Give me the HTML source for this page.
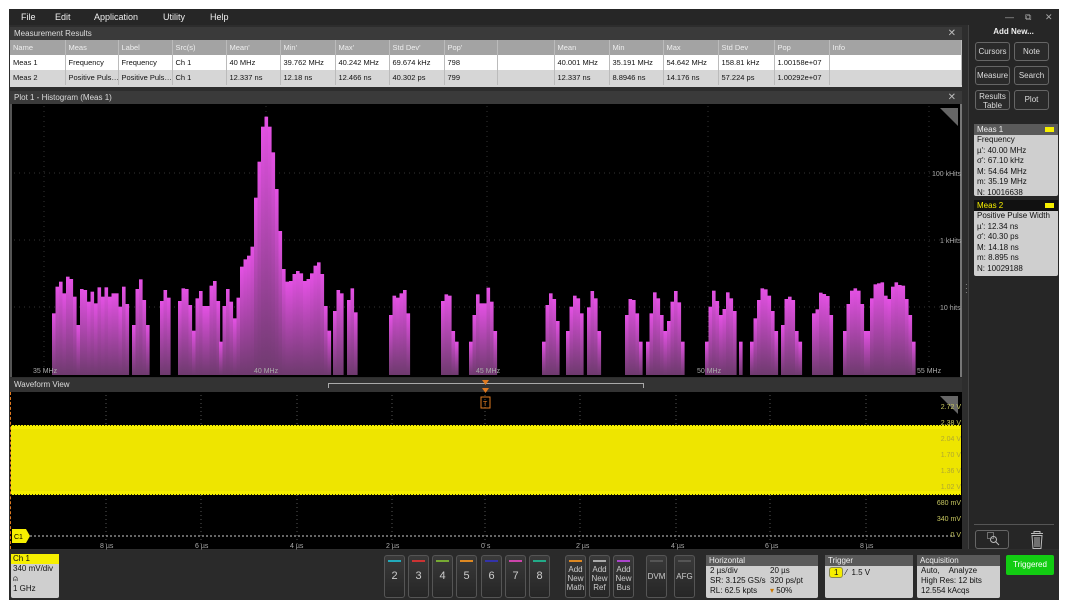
<!DOCTYPE html>
<html><head><meta charset="utf-8"><style>
*{margin:0;padding:0;box-sizing:border-box}
body{width:1069px;height:612px;background:#fff;position:relative;overflow:hidden;font-family:"Liberation Sans",sans-serif;font-size:8px;color:#111}
.a{position:absolute}
.dark{background:#2d2d2d}
.hdr{background:#3a3a3a;color:#ddd;font-size:8px;padding-left:4px;line-height:13px}
.x{position:absolute;right:6px;top:0;color:#bbb;font-size:10px}
table{border-collapse:collapse;font-size:7.5px}
td{height:15px;padding-left:3px;border-right:1px solid #bbb;white-space:nowrap;overflow:hidden}
.th td{background:#a3a3a3;color:#eee;height:15px}
.r1 td{background:#fff}
.r2 td{background:#d6d6d6}
.btn{position:absolute;background:#2a2a2a;border:1px solid #666;border-radius:3px;color:#ddd;font-size:8px;text-align:center}
.cb{position:absolute;top:555px;width:21px;height:43px;background:linear-gradient(#3a3a3a,#262626);border:1px solid #555;border-radius:3px;color:#ccc;text-align:center}
.cb i{display:block;height:2px;margin:4px 3px 0}
.cb span{display:block;font-size:11px;margin-top:8px}
.cb b{display:block;font-weight:normal;font-size:8px;line-height:9px;margin-top:3px}
.box{position:absolute;background:#cfcfcf;border-radius:2px;font-size:8px;line-height:10px;color:#111}
.box .h{background:#5a5a5a;color:#eee;padding-left:3px;line-height:11px}
.mb{position:absolute;left:974px;width:84px;background:#cfcfcf;border-radius:2px;font-size:8px;line-height:10.5px;padding-left:3px}
.yl{position:absolute;right:108px;color:#c8c860;font-size:7px}
.yl.in{color:#b0a830}
.tl{position:absolute;top:543px;color:#aaa;font-size:7px}
</style></head><body>
<div class="a dark" style="left:9px;top:9px;width:1050px;height:591px"></div>
<div class="a" style="left:9px;top:9px;width:1050px;height:16px;background:#262626;color:#eee;font-size:9px;line-height:16px">
<span class="a" style="left:12px">File</span><span class="a" style="left:46px">Edit</span><span class="a" style="left:85px">Application</span><span class="a" style="left:154px">Utility</span><span class="a" style="left:201px">Help</span>
<span class="a" style="left:996px;color:#aaa">—</span><span class="a" style="left:1016px;color:#aaa">⧉</span><span class="a" style="left:1036px;color:#aaa">✕</span>
</div>
<div class="a hdr" style="left:10px;top:27px;width:952px;height:13px">Measurement Results<span class="x">✕</span></div>
<div class="a" style="left:10px;top:40px;width:952px;height:47px;background:#d6d6d6">
<table style="width:952px;table-layout:fixed">
<colgroup><col style="width:55px"><col style="width:53px"><col style="width:54px"><col style="width:54px"><col style="width:54px"><col style="width:55px"><col style="width:54px"><col style="width:55px"><col style="width:53px"><col style="width:57px"><col style="width:55px"><col style="width:54px"><col style="width:55px"><col style="width:56px"><col style="width:55px"><col></colgroup>
<tr class="th"><td>Name</td><td>Meas</td><td>Label</td><td>Src(s)</td><td>Mean'</td><td>Min'</td><td>Max'</td><td>Std Dev'</td><td>Pop'</td><td></td><td>Mean</td><td>Min</td><td>Max</td><td>Std Dev</td><td>Pop</td><td>Info</td></tr>
<tr class="r1"><td>Meas 1</td><td>Frequency</td><td>Frequency</td><td>Ch 1</td><td>40 MHz</td><td>39.762 MHz</td><td>40.242 MHz</td><td>69.674 kHz</td><td>798</td><td></td><td>40.001 MHz</td><td>35.191 MHz</td><td>54.642 MHz</td><td>158.81 kHz</td><td>1.00158e+07</td><td></td></tr>
<tr class="r2"><td>Meas 2</td><td>Positive Puls…</td><td>Positive Puls…</td><td>Ch 1</td><td>12.337 ns</td><td>12.18 ns</td><td>12.466 ns</td><td>40.302 ps</td><td>799</td><td></td><td>12.337 ns</td><td>8.8946 ns</td><td>14.176 ns</td><td>57.224 ps</td><td>1.00292e+07</td><td></td></tr>
</table></div>
<div class="a hdr" style="left:10px;top:91px;width:952px;height:13px">Plot 1 - Histogram (Meas 1)<span class="x">✕</span></div>
<div class="a" style="left:10px;top:104px;width:952px;height:273px;background:#000;border-left:2px solid #555;border-right:2px solid #777"></div>
<svg class="a" style="left:0;top:0" width="1069" height="612" id="hs">
<defs><linearGradient id="g" x1="0" y1="0" x2="0" y2="1"><stop offset="0" stop-color="#e451e4"/><stop offset="1" stop-color="#6e3a6e"/></linearGradient></defs>
<g stroke="#333" stroke-dasharray="1,4">
<line x1="44" y1="106" x2="44" y2="372"/><line x1="266" y1="106" x2="266" y2="372"/><line x1="487" y1="106" x2="487" y2="372"/><line x1="708" y1="106" x2="708" y2="372"/><line x1="929" y1="106" x2="929" y2="372"/>
<line x1="14" y1="173" x2="958" y2="173"/><line x1="14" y1="240" x2="958" y2="240"/><line x1="14" y1="307" x2="958" y2="307"/>
</g>
<g id="bars"></g>
<g fill="#aaa" font-size="7" font-family="Liberation Sans">
<text x="33" y="373">35 MHz</text><text x="254" y="373">40 MHz</text><text x="476" y="373">45 MHz</text><text x="697" y="373">50 MHz</text><text x="917" y="373">55 MHz</text>
<text x="932" y="176">100 kHits</text><text x="940" y="243">1 kHits</text><text x="940" y="310">10 hits</text>
</g>
<polygon points="940,108 958,108 958,126" fill="#666"/>
</svg>
<div class="a hdr" style="left:10px;top:378px;width:952px;height:14px;background:#333">Waveform View</div>
<div class="a" style="left:328px;top:383px;width:316px;height:5px;border:1px solid #aaa;border-bottom:none"></div>
<div class="a" style="left:10px;top:392px;width:952px;height:157px;background:#000;border-left:1px dashed #e07a20"></div>
<svg class="a" style="left:0;top:0" width="1069" height="612">
<g stroke="#555" stroke-dasharray="1,3">
<line x1="106" y1="395" x2="106" y2="545"/><line x1="201" y1="395" x2="201" y2="545"/><line x1="297" y1="395" x2="297" y2="545"/><line x1="392" y1="395" x2="392" y2="545"/><line x1="485" y1="395" x2="485" y2="545"/><line x1="580" y1="395" x2="580" y2="545"/><line x1="676" y1="395" x2="676" y2="545"/><line x1="770" y1="395" x2="770" y2="545"/><line x1="866" y1="395" x2="866" y2="545"/>
</g>
<rect x="11" y="425" width="950" height="70" fill="#f6ef00"/>
<rect x="11" y="429" width="950" height="62" fill="#eee500"/>
<g stroke="#3a3a00" stroke-width="1"><line x1="11" y1="425.5" x2="961" y2="425.5" stroke-dasharray="1,2"/><line x1="11" y1="494.5" x2="961" y2="494.5" stroke-dasharray="1,2"/></g>
<line x1="30" y1="536" x2="955" y2="536" stroke="#ccc" stroke-dasharray="2,2"/>
<path d="M12 529 h14 l4 7 l-4 7 h-14z" fill="#f6ef00"/><text x="14" y="539" font-size="7" fill="#000">C1</text>
<path d="M482 380 h7 l-3.5 5z M482 388 h7 l-3.5 5z" fill="#e07a20"/>
<rect x="481" y="397" width="9" height="11" fill="none" stroke="#e07a20"/><text x="483" y="406" font-size="7" fill="#e07a20">T</text>
<polygon points="940,396 958,396 958,414" fill="#666"/>
</svg>
<div class="yl" style="top:404px">2.72 V</div><div class="yl" style="top:420px">2.38 V</div><div class="yl in" style="top:436px">2.04 V</div><div class="yl in" style="top:452px">1.70 V</div><div class="yl in" style="top:468px">1.36 V</div><div class="yl in" style="top:484px">1.02 V</div><div class="yl" style="top:500px">680 mV</div><div class="yl" style="top:516px">340 mV</div><div class="yl" style="top:532px">0 V</div>
<div class="tl" style="left:100px">8 µs</div><div class="tl" style="left:195px">6 µs</div><div class="tl" style="left:290px">4 µs</div><div class="tl" style="left:386px">2 µs</div><div class="tl" style="left:481px">0 s</div><div class="tl" style="left:576px">2 µs</div><div class="tl" style="left:671px">4 µs</div><div class="tl" style="left:765px">6 µs</div><div class="tl" style="left:860px">8 µs</div>
<div class="a" style="left:968px;top:25px;width:91px;height:524px;background:#262626;border-left:1px solid #444"></div>
<div class="a" style="left:970px;top:27px;width:87px;color:#eee;font-size:8px;font-weight:bold;text-align:center">Add New...</div>
<div class="btn" style="left:975px;top:42px;width:35px;height:19px;line-height:17px">Cursors</div>
<div class="btn" style="left:1014px;top:42px;width:35px;height:19px;line-height:17px">Note</div>
<div class="btn" style="left:975px;top:66px;width:35px;height:19px;line-height:17px">Measure</div>
<div class="btn" style="left:1014px;top:66px;width:35px;height:19px;line-height:17px">Search</div>
<div class="btn" style="left:975px;top:90px;width:35px;height:20px;line-height:9px;padding-top:1px">Results<br>Table</div>
<div class="btn" style="left:1014px;top:90px;width:35px;height:20px;line-height:18px">Plot</div>
<div class="mb" style="top:124px;height:72px;padding:0"><div style="background:#5a5a5a;color:#eee;padding-left:3px;line-height:11px">Meas 1<span style="float:right;margin:3px 4px;width:9px;height:5px;background:#f6ef00"></span></div><div style="padding-left:3px">Frequency<br>µ': 40.00 MHz<br>σ': 67.10 kHz<br>M: 54.64 MHz<br>m: 35.19 MHz<br>N: 10016638</div></div>
<div class="mb" style="top:200px;height:76px;padding:0"><div style="background:#111;color:#f6ef00;padding-left:3px;line-height:11px">Meas 2<span style="float:right;margin:3px 4px;width:9px;height:5px;background:#f6ef00"></span></div><div style="padding-left:3px">Positive Pulse Width<br>µ': 12.34 ns<br>σ': 40.30 ps<br>M: 14.18 ns<br>m: 8.895 ns<br>N: 10029188</div></div>
<div class="a" style="left:974px;top:524px;width:80px;height:1px;background:#555"></div>
<div class="a" style="left:975px;top:530px;width:34px;height:19px;border:1px solid #666;border-radius:3px"></div>
<svg class="a" style="left:970px;top:525px" width="90" height="30">
<g fill="none" stroke="#bbb" stroke-width="1"><rect x="17.5" y="7.5" width="6" height="6" stroke-dasharray="1,1"/><circle cx="23.5" cy="14.5" r="3"/><line x1="25.5" y1="16.5" x2="29" y2="20"/>
<path d="M61 8.5 h12 M64 8.5 v-2 h6 v2 M62 10.5 l1 13 h8 l1 -13z M65 12 v10 M67 12 v10 M69 12 v10"/></g>
</svg>
<div class="a" style="left:965px;top:283px;color:#aaa;font-size:8px;line-height:4px">·<br>·<br>·</div>
<div class="a" style="left:9px;top:550px;width:1050px;height:50px;background:#2a2a2a"></div>
<div class="box" style="left:11px;top:554px;width:48px;height:44px"><div style="background:#f6ef00;line-height:10px;padding-left:2px">Ch 1</div><div style="padding-left:2px;line-height:10px">340 mV/div<br>⍝<br>1 GHz</div></div>
<div class="cb" style="left:384px"><i style="background:#2ab"></i><span>2</span></div>
<div class="cb" style="left:408px"><i style="background:#c33"></i><span>3</span></div>
<div class="cb" style="left:432px"><i style="background:#7a3"></i><span>4</span></div>
<div class="cb" style="left:456px"><i style="background:#d82"></i><span>5</span></div>
<div class="cb" style="left:481px"><i style="background:#33a"></i><span>6</span></div>
<div class="cb" style="left:505px"><i style="background:#c4a"></i><span>7</span></div>
<div class="cb" style="left:529px"><i style="background:#2a8"></i><span>8</span></div>
<div class="cb" style="left:565px"><i style="background:#d82"></i><b>Add<br>New<br>Math</b></div>
<div class="cb" style="left:589px"><i style="background:#aaa"></i><b>Add<br>New<br>Ref</b></div>
<div class="cb" style="left:613px"><i style="background:#a4c"></i><b>Add<br>New<br>Bus</b></div>
<div class="cb" style="left:646px"><i style="background:#555"></i><b style="margin-top:10px">DVM</b></div>
<div class="cb" style="left:674px"><i style="background:#555"></i><b style="margin-top:10px">AFG</b></div>
<div class="box" style="left:706px;top:555px;width:112px;height:43px"><div class="h">Horizontal</div><div style="padding-left:4px">2 µs/div<span class="a" style="left:64px">20 µs</span><br>SR: 3.125 GS/s<span class="a" style="left:64px">320 ps/pt</span><br>RL: 62.5 kpts<span class="a" style="left:64px"><span style="color:#c70">▾</span> 50%</span></div></div>
<div class="box" style="left:825px;top:555px;width:88px;height:43px"><div class="h">Trigger</div><div style="padding:2px 4px"><span style="background:#f6ef00;border:1px solid #885;border-radius:3px;padding:0 4px">1</span> ⁄ &nbsp;1.5 V</div></div>
<div class="box" style="left:917px;top:555px;width:83px;height:43px"><div class="h">Acquisition</div><div style="padding-left:4px">Auto, &nbsp;&nbsp;&nbsp;Analyze<br>High Res: 12 bits<br>12.554 kAcqs</div></div>
<div class="a" style="left:1006px;top:555px;width:48px;height:20px;background:#12cc12;border-radius:2px;color:#fff;font-size:8px;text-align:center;line-height:20px">Triggered</div>
<script>
var segs=[
[52,[640,560,545,580,530,537,590,675,567,570,605,575,610,562,590,562,590,580,580,620,560,612]],
[132,[675,567,538,600,675]],
[160,[603,570,593]],
[178,[603,565,567,615,692,595,573,618,618,557,543,603]],
[219,[725,618,567,605,655,593,500,478,467,440,293,185,80,50,80,157,267,393,507,545,543,522,513,520,543,537,520,497,487,522,618,692]],
[333,[633,570,580]],[347,[600,565,637]],
[389,[645,587,593,580,570,640]],
[441,[603,583,587,693,725]],
[469,[725,645,583,610,610,563,605,693]],
[542,[725,615,580,597,663]],[566,[693,620,587,595,640]],[587,[622,573,595,693]],
[625,[645,597,600,640,725]],[646,[725,640,577,595,645,693,663,605,573,607,725]],
[705,[725,620,572,603,645,627,577,595,633]],[739,[725]],
[750,[725,655,600,565,568,587,633,693]],[781,[675,597,590,600,693,725]],
[812,[640,628,578,582,588,645]],[843,[693,612,572,565,572,612,693,693]],
[870,[595,553,550,547,587,597,560,547,555,557,597,645,725]]];
var s='';
segs.forEach(function(g){g[1].forEach(function(t,i){var y=100+t/3;s+='<rect x="'+(g[0]+i*3.5)+'" y="'+y+'" width="3.6" height="'+(375-y)+'" fill="url(#g)"/>';});});
document.getElementById('bars').innerHTML=s;
</script>
</body></html>
